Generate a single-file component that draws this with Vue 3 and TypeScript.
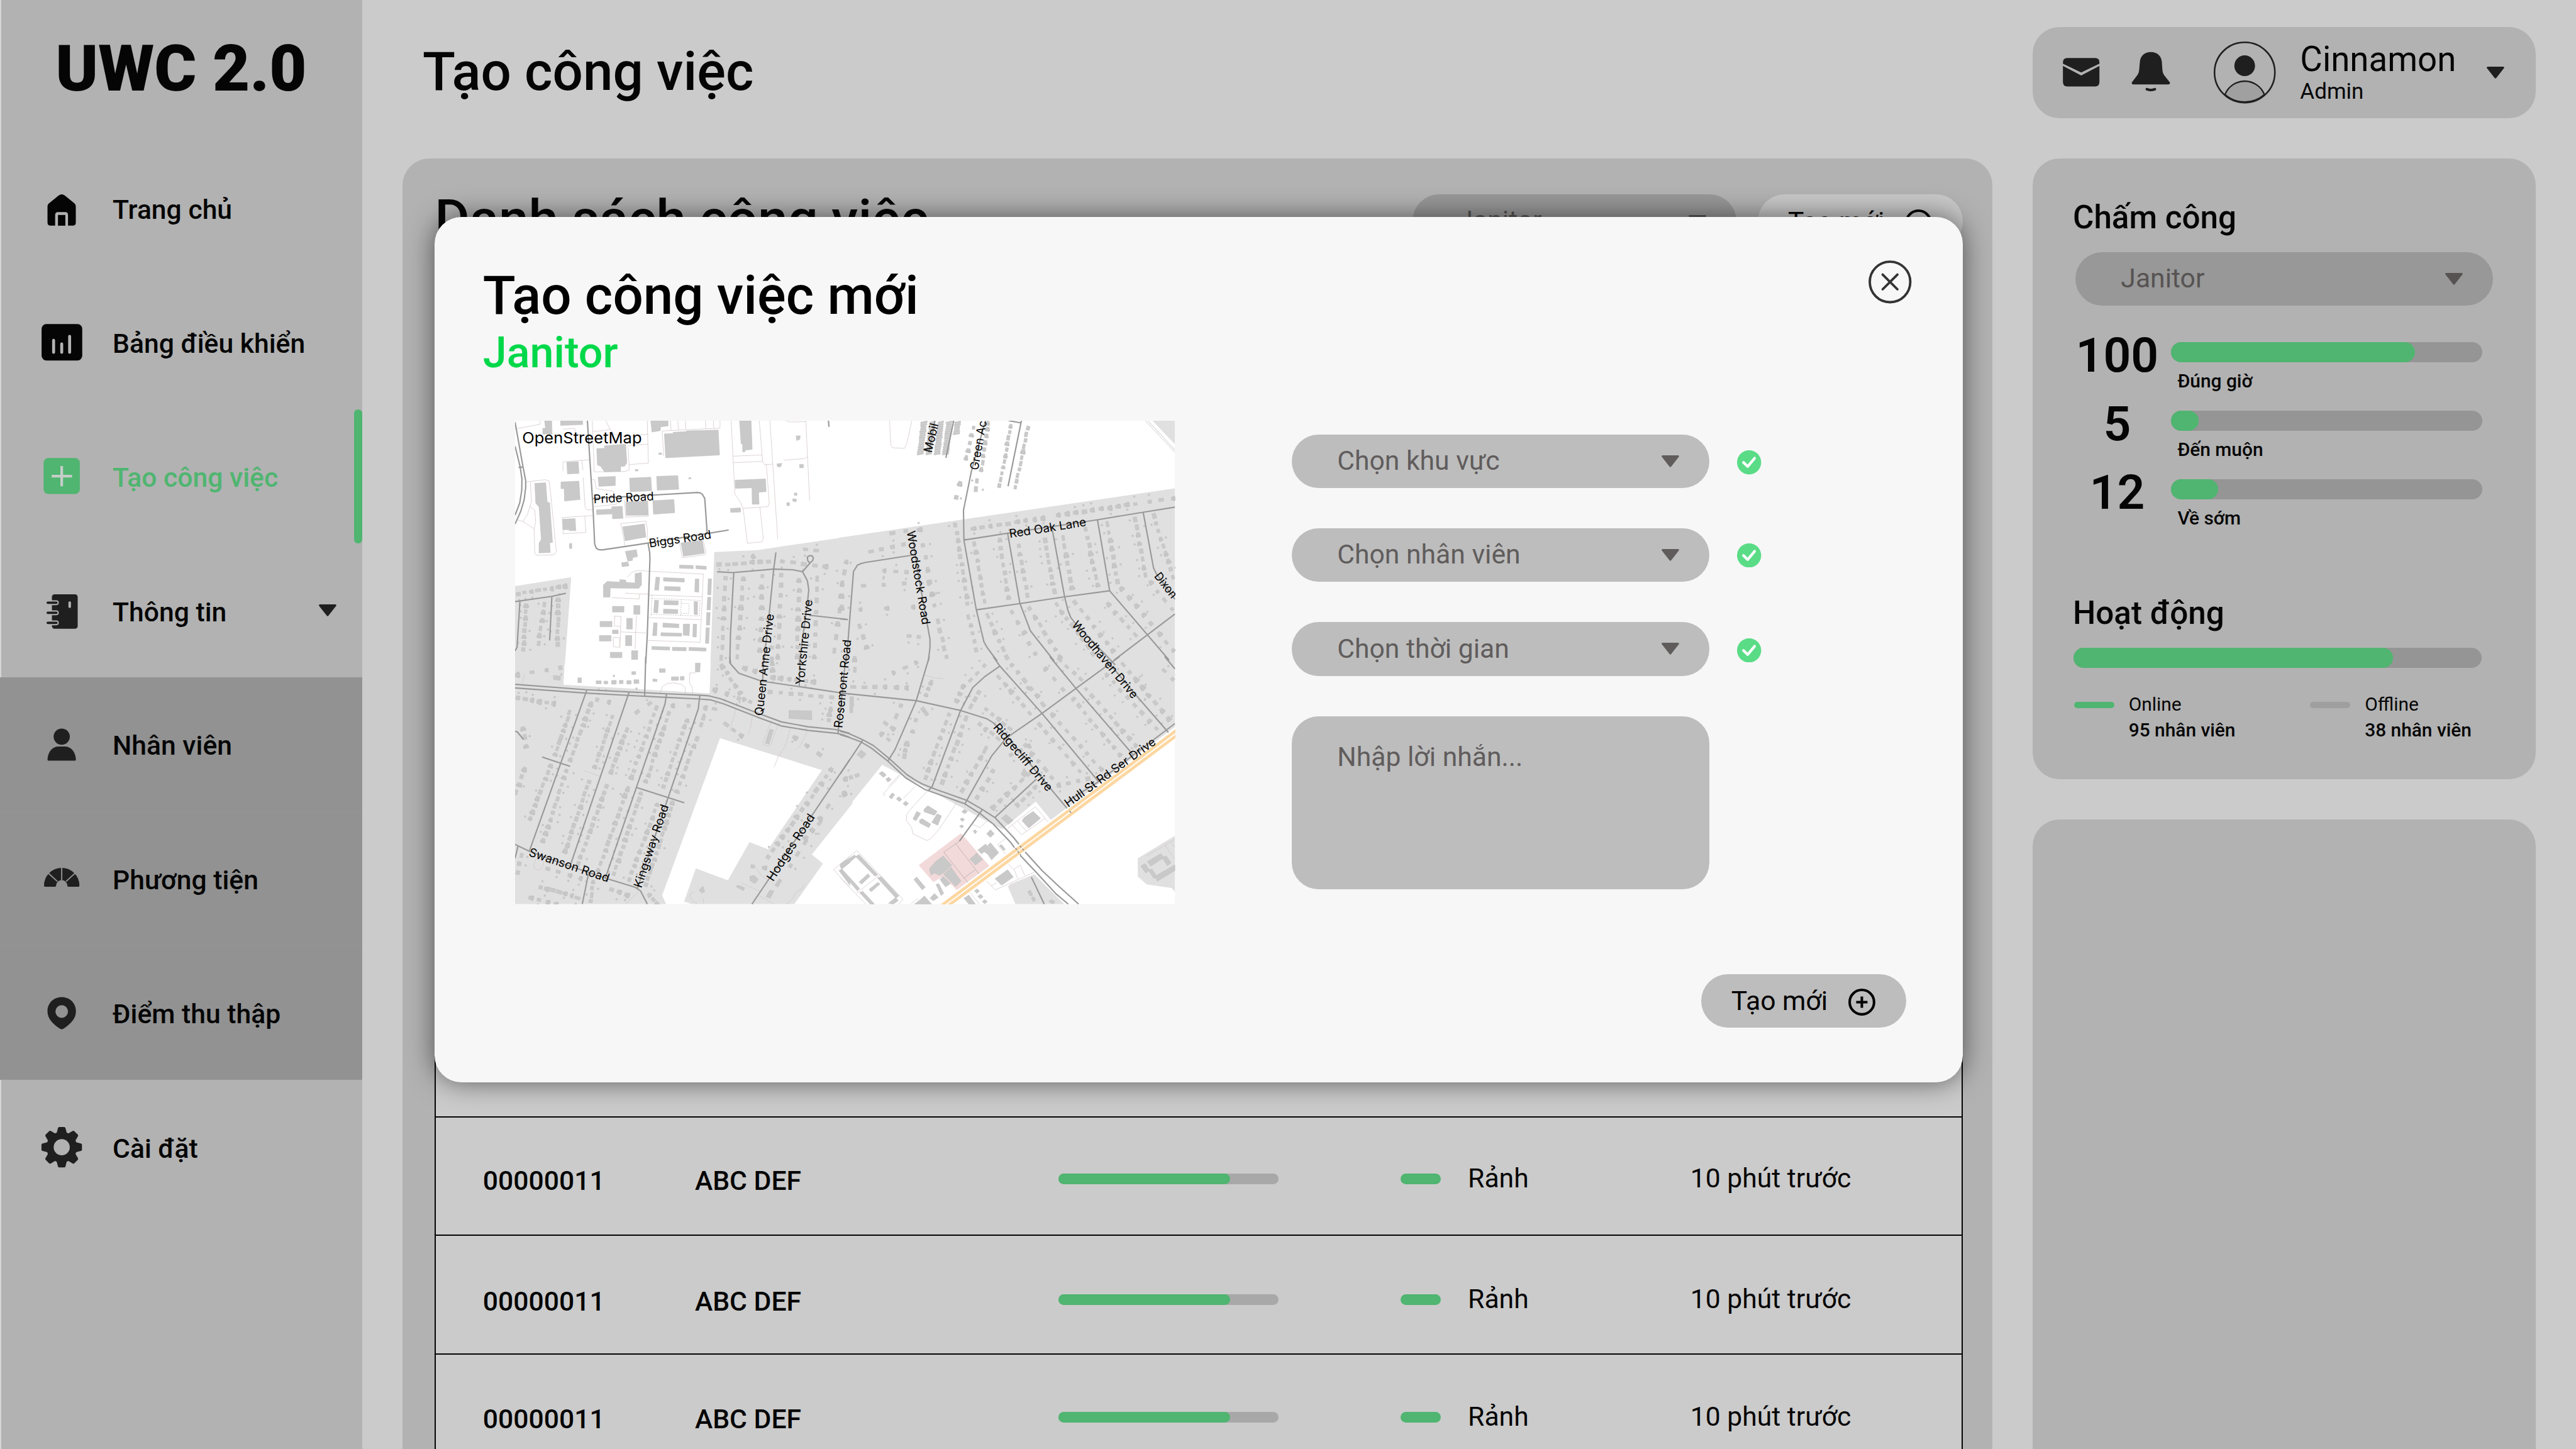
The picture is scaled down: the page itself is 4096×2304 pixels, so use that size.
<script setup lang="ts">
interface NavItem {
  label: string
  icon: string
  active?: boolean
  sub?: boolean
  caret?: boolean
}

const nav: NavItem[] = [
  { label: 'Trang chủ', icon: 'home' },
  { label: 'Bảng điều khiển', icon: 'board' },
  { label: 'Tạo công việc', icon: 'create', active: true },
  { label: 'Thông tin', icon: 'book', caret: true },
  { label: 'Nhân viên', icon: 'person', sub: true },
  { label: 'Phương tiện', icon: 'gauge', sub: true },
  { label: 'Điểm thu thập', icon: 'pin', sub: true },
  { label: 'Cài đặt', icon: 'gear' },
]

const attendance = [
  { count: 100, label: 'Đúng giờ', share: 78.4 },
  { count: 5, label: 'Đến muộn', share: 9 },
  { count: 12, label: 'Về sớm', share: 15.3 },
]

const jobs = [1, 2, 3].map((key) => ({
  key,
  id: '00000011',
  name: 'ABC DEF',
  progress: 78,
  status: 'Rảnh',
  time: '10 phút trước',
}))

const fields = ['Chọn khu vực', 'Chọn nhân viên', 'Chọn thời gian']

/* ---------- map ---------- */
// The survey is split into four sheets, each with its own grid; place() brings
// sheet coordinates into the 1366 x 1000 map.
type Sheet = { kx: number; ky: number; dx: number; dy: number }
const NW: Sheet = { kx: 0.4592, ky: 0.3316, dx: -27.1, dy: -21.9 }
const NE: Sheet = { kx: 0.4592, ky: 0.3316, dx: 673, dy: -21.9 }
const SW: Sheet = { kx: 0.4592, ky: 0.338, dx: -27.1, dy: 488 }
const SE: Sheet = { kx: 0.4592, ky: 0.338, dx: 673, dy: 488 }

const project = (s: Sheet, pts: string): number[][] =>
  pts.split(' ').map((p) => {
    const [x, y] = p.split(',').map(Number)
    return [x * s.kx + s.dx, y * s.ky + s.dy]
  })
const place = (s: Sheet, list: string[]): string[] =>
  list.map((pts) => project(s, pts).map((p) => p.map((v) => v.toFixed(1)).join(',')).join(' '))

const land = [
  ...place(NW, ['957,885 1150,873 1568,788 1568,1580 940,1580', '59,1098 312,1042 284,1580 59,1580']),
  ...place(NE, ['-5,796 1509,488 1509,1580 -5,1580', '1408,66 1509,66 1509,212']),
  ...place(SW, [
    '59,0 284,0 277,172 936,225 942,0 1580,0 1580,900 1397,1212 1447,1268 1318,1515 855,1515 821,1500 874,1297 1018,1370 1116,1136 1200,1180 1442,695 983,500 722,1462 740,1515 59,1515',
  ]),
  ...place(SE, [
    '-5,0 1509,0 1509,430 950,1000 882,888 732,1057 650,1000 440,845 340,770 262,715 190,662 -5,990',
    '1509,1097 1342,1235 1342,1347 1382,1395 1495,1417 1509,1440',
    '757,1410 765,1395 875,1333 1010,1515 790,1515',
  ]),
]
const retail = place(SE, ['545,1082 673,1282 525,1430 466,1345 420,1380 354,1277'])

const buildings = [
  ...place(NW, [
    '192,66 224,66 226,150 184,150 184,113 196,113',
    '264,66 364,66 364,90 264,96',
    '671,66 749,66 749,98 715,104 714,128 676,137',
    '732,148 772,145 772,138 832,134 832,129 975,124 981,280 738,298',
    '427,240 462,238 462,222 558,212 563,330 552,350 535,352 535,382 462,385 445,350 430,342',
    '292,325 344,321 347,395 295,398',
    '433,418 511,413 511,470 437,476',
    '575,424 671,418 675,503 578,510',
    '697,413 793,408 797,494 700,500',
    '266,448 347,443 352,558 282,567 280,490 266,490',
    '148,457 197,453 204,575 215,577 228,825 215,827 218,888 167,891 167,830 177,805 167,605 152,580',
    '273,680 330,677 333,752 303,752 303,746 275,746',
    '426,622 495,617 495,603 542,600 546,675 498,678 498,648 427,652',
    '558,573 655,567 659,655 561,657',
    '680,565 775,558 779,640 683,650',
    '544,728 642,710 649,792 555,815',
    '807,828 903,811 913,893 818,912',
    '556,881 606,871 611,914 590,920 588,938 567,942',
    '539,952 568,947 572,972 542,977',
    '1071,66 1123,66 1128,245 1097,250 1095,260 1085,260 1085,213 1078,210',
    '1051,437 1188,429 1191,508 1157,512 1159,587 1128,587 1127,485 1052,488',
    '1030,613 1075,610 1076,636 1031,638',
    '457,1090 475,1069 530,1073 532,1057 557,1060 560,1075 600,1078 600,1020 629,1013 629,1090 617,1112 488,1110 487,1167 457,1167',
    '817,1335 846,1335 844,1407 817,1404',
    '800,967 862,969 862,989 800,986', '874,970 921,975 921,994 874,989',
    '728,1045 822,1050 822,1073 728,1067', '733,1100 804,1103 804,1128 733,1124',
    '694,1042 711,1043 706,1124 688,1122', '871,1053 888,1054 887,1136 869,1133',
    '731,1188 795,1190 794,1216 730,1214', '728,1241 793,1244 792,1270 728,1268',
    '688,1186 706,1187 702,1265 684,1263', '866,1194 882,1195 881,1277 866,1274',
    '726,1328 798,1335 797,1358 725,1354', '717,1388 810,1392 810,1411 716,1408',
    '684,1327 700,1328 697,1408 679,1406', '862,1335 878,1337 876,1416 860,1414',
    '930,1052 945,1053 942,1153 927,1152', '927,1167 942,1168 939,1247 924,1246',
    '923,1262 939,1263 936,1342 921,1341', '920,1357 935,1358 932,1456 917,1454',
    '676,1474 756,1478 756,1498 676,1494', '768,1479 831,1481 830,1502 768,1500', '843,1480 920,1484 920,1504 843,1500',
    '498,1224 550,1224 550,1260 498,1260', '594,1219 622,1219 622,1274 594,1274', '442,1318 496,1318 496,1352 442,1352',
    '562,1299 588,1299 588,1366 562,1366', '439,1406 492,1406 492,1441 439,1441', '557,1406 585,1406 585,1470 557,1470',
    '488,1511 541,1511 541,1545 488,1545', '584,1501 612,1501 612,1556 584,1556', '498,1372 524,1372 524,1395 498,1395',
    '304,832 315,832 315,863 304,863', '601,370 613,370 613,380 601,380', '842,421 852,421 852,429 842,429',
    '707,267 720,267 720,277 707,277', '1342,338 1359,338 1359,360 1342,360', '1240,335 1262,332 1256,355 1241,352',
    '1318,517 1330,517 1330,532 1318,532', '1284,577 1296,577 1296,596 1284,596', '1312,552 1328,556 1326,572 1310,568',
    '1326,160 1345,160 1343,182 1328,190',
  ]),
  ...place(SW, [
    '1294,330 1396,333 1397,387 1294,378',
    '1187,530 1207,445 1224,450 1204,536',
    '1519,1310 1532,1300 1568,1370 1568,1400', '1523,1282 1568,1235 1568,1262 1532,1300',
    '872,40 894,40 892,94 872,94', '764,124 796,124 796,146 764,146', '804,122 821,122 821,144 804,144',
    '710,74 736,74 736,97 710,97', '680,137 699,139 699,153 680,152', '585,92 603,92 603,110 585,110',
    '232,115 265,120 262,146 232,140', '342,130 358,130 358,160 342,160',
    '1118,1345 1138,1340 1156,1365 1140,1390 1118,1372', '1190,1470 1208,1430 1226,1435 1210,1480',
    '1230,1400 1250,1360 1262,1370 1244,1412', '1055,1408 1065,1400 1094,1415 1088,1433', '888,1430 906,1405 914,1440 900,1448',
  ]),
  ...place(SE, [
    '402,1300 430,1255 465,1220 503,1278 470,1320 447,1340 425,1325 410,1338',
    '466,1333 500,1290 545,1375 520,1407',
    '585,1240 615,1203 642,1242 610,1277',
    '820,1005 830,985 870,948 903,990 850,1050',
    '698,1360 755,1305 781,1350 728,1400',
    '620,1185 655,1148 705,1213 683,1245 665,1210 650,1195 637,1208',
    '665,1155 678,1140 715,1200 703,1217',
    '660,1085 678,1060 695,1085 677,1107',
    '727,990 748,966 780,1003 758,1028',
    '378,935 395,912 437,948 425,972 378,950', '328,995 345,948 363,960 342,1005',
    '358,1000 370,993 408,1025 400,1047 358,1018', '413,1015 437,962 457,975 440,1033',
    '0,1270 65,1215 73,1225 8,1300', '70,1225 85,1212 170,1335 157,1345', '0,1310 8,1300 88,1420 78,1435',
    '85,1380 125,1330 135,1345 97,1393', '168,1355 185,1347 265,1465 252,1480', '87,1445 102,1437 155,1515 135,1515',
    '218,1510 250,1475 262,1495 240,1515', '130,1425 170,1382 180,1392 140,1440',
    '450,1365 465,1345 498,1390 475,1410', '332,1365 345,1350 384,1412 370,1428', '432,1395 445,1390 467,1450 455,1463',
    '360,1490 380,1465 412,1515 335,1515', '405,1480 425,1450 443,1475 420,1495', '558,1480 580,1460 610,1515 580,1515',
    '605,1435 618,1422 628,1437 616,1449', '620,1468 633,1455 645,1470 632,1483', '640,1500 652,1488 664,1500 652,1513',
    '1385,1255 1445,1207 1460,1230 1400,1283', '1452,1232 1470,1220 1492,1262 1475,1280',
    '1355,1283 1375,1267 1395,1307 1378,1325', '1390,1310 1405,1300 1428,1345 1415,1360', '1420,1345 1509,1275 1509,1310 1430,1375',
    '175,715 190,703 208,725 195,740', '205,750 220,738 230,755 215,768', '220,860 235,835 246,845 232,872',
    '253,870 265,858 278,875 266,888', '283,900 296,885 308,900 296,915', '75,600 95,572 117,597 98,625',
    '718,1158 727,1150 745,1180 737,1188', '600,1068 608,1060 617,1072 608,1085', '548,950 560,935 574,948 562,962',
    '540,995 550,988 561,998 551,1010', '538,1038 548,1030 558,1040 548,1050',
    '845,1440 858,1430 868,1460 856,1466', '862,1475 873,1470 882,1492 870,1500', '940,1500 952,1487 968,1500 960,1515',
    '815,720 828,690 845,710 832,740', '640,590 655,545 667,555 652,595',
  ]),
]

// Repeatable pseudo-random numbers, so that the blocks look alike on each load.
let seed = 20231
const rand = (): number => {
  seed = (seed * 16807) % 2147483647
  return seed / 2147483647
}
const box = (cx: number, cy: number, w: number, h: number, a: number): string => {
  const c = Math.cos(a)
  const s = Math.sin(a)
  const corner = (u: number, v: number) => `${(cx + u * c - v * s).toFixed(1)} ${(cy + u * s + v * c).toFixed(1)}`
  return `M${corner(-w, -h)}L${corner(w, -h)}L${corner(w, h)}L${corner(-w, h)}Z`
}
// A row of n houses from one point to another, with sheds behind some of them.
const row = (s: Sheet, line: string, n: number, size = 1): string => {
  const [[x1, y1], [x2, y2]] = project(s, line)
  const a = Math.atan2(y2 - y1, x2 - x1)
  let d = ''
  for (let i = 0; i < n; i++) {
    const t = n > 1 ? i / (n - 1) : 0
    const x = x1 + (x2 - x1) * t + (rand() - 0.5) * 2
    const y = y1 + (y2 - y1) * t + (rand() - 0.5) * 2
    const w = (3.4 + rand() * 2.4) * size
    const h = (2.8 + rand() * 1.3) * size
    d += box(x, y, w, h, a)
    if (rand() > 0.6) d += box(x + w * 0.4 * Math.cos(a), y + w * 0.4 * Math.sin(a), w * 0.5, h * 1.45, a)
    if (size === 1 && rand() > 0.3) {
      const off = (rand() > 0.5 ? 1 : -1) * (9 + rand() * 7)
      d += box(x - off * Math.sin(a), y + off * Math.cos(a), 1.6, 1.6, a)
    }
  }
  return d
}
const rows: [Sheet, string, number, number?][] = [
  [NW, '980,965 1200,945', 7], [NW, '72,1145 285,1100', 8], [NW, '109,1220 97,1490', 8], [NW, '191,1215 165,1455', 6],
  [NW, '255,1185 250,1460', 8], [NW, '1006,1050 990,1545', 9], [NW, '1087,1050 1060,1540', 9], [NW, '1173,1035 1165,1500', 8],
  [NW, '1258,1030 1245,1540', 9], [NW, '1340,1065 1330,1540', 9], [NW, '1420,1050 1410,1540', 8], [NW, '1265,945 1460,975', 5],
  [NW, '1370,870 1415,875', 2], [NW, '1535,1080 1500,1500', 6], [NW, '1215,1480 1215,1560', 2], [NW, '1130,915 1135,910', 1],
  [NE, '600,740 915,674', 9], [NE, '985,657 1330,585', 10], [NE, '1395,570 1500,550', 3], [NE, '605,835 650,1195', 8],
  [NE, '720,810 758,1170', 8], [NE, '805,845 845,1155', 7], [NE, '924,815 965,1130', 8], [NE, '1005,800 1045,1110', 7],
  [NE, '1108,745 1160,1090', 8], [NE, '1205,710 1250,1070', 8], [NE, '1330,680 1375,1030', 8], [NE, '1415,660 1500,1040', 9],
  [NE, '520,715 575,1210', 11], [NE, '580,1290 612,1495', 5], [NE, '665,1285 750,1540', 6], [NE, '775,1260 880,1520', 5],
  [NE, '855,1240 990,1540', 7], [NE, '975,1215 1140,1520', 8], [NE, '1060,1200 1230,1500', 7], [NE, '1210,1215 1330,1400', 5],
  [NE, '1270,1115 1400,1330', 5], [NE, '1440,1400 1500,1500', 3], [NE, '1400,1075 1495,1240', 4],
  [NE, '770,100 718,470', 11, 0.9], [NE, '845,115 790,480', 11, 0.9], [NE, '600,110 570,300', 5, 0.9], [NE, '668,80 638,370', 8, 0.9],
  [NE, '540,460 525,545', 2], [NE, '615,440 612,490', 2], [NE, '235,770 360,745', 3], [NE, '138,880 285,840', 4],
  [NE, '375,845 415,1150', 5], [NE, '30,945 20,1010', 2], [NE, '200,1000 300,1010', 3], [NE, '105,1095 290,1080', 3],
  [NE, '90,1245 330,1230', 3], [NE, '90,1350 120,1480', 3], [NE, '310,1410 355,1415', 2], [NE, '440,1320 480,1540', 5],
  [NE, '8,1085 5,1235', 3], [NE, '400,1080 425,1220', 3],
  [SW, '305,345 238,600', 8], [SW, '400,295 308,630', 9], [SW, '497,370 420,675', 9], [SW, '562,450 492,705', 8],
  [SW, '695,315 583,740', 11], [SW, '752,350 650,765', 11], [SW, '833,390 728,795', 11], [SW, '877,500 790,825', 8],
  [SW, '908,375 898,415', 2], [SW, '218,670 128,990', 9], [SW, '290,700 187,1125', 11], [SW, '393,765 285,1190', 12],
  [SW, '470,795 345,1265', 13], [SW, '565,810 435,1310', 13], [SW, '628,835 505,1330', 13], [SW, '700,905 575,1365', 12],
  [SW, '770,895 650,1395', 14], [SW, '70,255 235,288', 6], [SW, '100,690 65,830', 4], [SW, '175,1410 340,1475', 7],
  [SW, '130,1480 245,1515', 4], [SW, '410,1380 400,1500', 4], [SW, '1485,695 1200,1225', 14], [SW, '1470,915 1300,1280', 6],
  [SW, '1550,750 1545,840', 2], [SW, '435,157 605,155', 6], [SW, '70,110 265,70', 4], [SW, '995,60 1090,260', 6],
  [SW, '960,205 1120,280', 4], [SW, '1220,130 1405,155', 6], [SW, '1210,215 1485,250', 7], [SW, '1010,415 1080,485', 3],
  [SW, '1320,495 1430,600', 3], [SW, '430,262 480,280', 2], [SW, '610,342 665,287', 2], [SW, '915,312 957,323', 2],
  [SW, '1095,70 1140,90', 2], [SW, '1215,10 1220,80', 3], [SW, '1480,320 1475,390', 3], [SW, '95,440 110,550', 3],
  [SW, '1430,1020 1370,1110', 3], [SW, '90,1220 70,1320', 3], [SW, '205,1300 355,1360', 4], [SW, '495,1425 565,1460', 3],
  [SW, '770,300 840,300', 2], [SW, '665,1460 700,1510', 3], [SW, '1130,1285 1185,1295', 2],
  [SE, '345,40 240,100', 3], [SE, '65,15 65,80', 2], [SE, '60,185 300,190', 6], [SE, '650,58 555,185', 4], [SE, '625,220 590,305', 3],
  [SE, '567,380 460,770', 9], [SE, '490,355 385,740', 9], [SE, '715,125 855,345', 6], [SE, '775,50 915,290', 6],
  [SE, '990,20 1085,140', 4], [SE, '925,75 1005,200', 3], [SE, '850,190 890,240', 2], [SE, '960,360 1175,690', 8],
  [SE, '900,420 1080,700', 7], [SE, '1110,200 1330,540', 9], [SE, '1275,50 1480,380', 8], [SE, '1200,110 1425,440', 8],
  [SE, '1050,260 1260,600', 9], [SE, '635,620 550,820', 5], [SE, '690,700 620,860', 4], [SE, '770,600 850,550', 3],
  [SE, '835,545 955,740', 5], [SE, '850,720 690,920', 6], [SE, '880,800 800,910', 4], [SE, '985,790 1115,750', 4],
  [SE, '660,325 765,440', 5], [SE, '630,415 710,500', 4], [SE, '205,410 235,440', 2], [SE, '255,365 275,300', 2],
  [SE, '300,535 290,610', 3], [SE, '340,390 325,460', 2], [SE, '525,275 555,185', 3], [SE, '410,160 390,235', 3],
  [SE, '375,325 385,345', 2], [SE, '188,475 217,510', 2], [SE, '50,260 50,330', 3], [SE, '25,750 75,725', 3],
  [SE, '1460,85 1500,135', 2], [SE, '1335,140 1360,190', 2], [SE, '1390,235 1395,240', 1], [SE, '20,840 22,845', 1],
]
const houses = rows.map((r) => row(...r)).join('')

// Mobile homes stand in tight slanted files.
let homes = ''
for (let c = 0; c < 5; c++) {
  for (let r = 0; r < (c > 3 ? 6 : 15); r++) {
    const [[x, y]] = project(NE, `${378 + c * 38 - r * 1.2},${76 + r * 14}`)
    homes += box(x, y, 5.5 + rand() * 1.5, 1.7, -0.22 + rand() * 0.06)
  }
}

const roads = [
  ...place(NW, [
    '385,66 398,350 410,600 418,835 425,862 435,870 452,872 665,828 925,770 1022,748',
    '408,552 880,514 893,516 903,525 914,550 925,765',
    '658,828 666,890 667,930 655,1400 648,1580',
    '59,75 95,355 107,440 107,480 100,560 85,630 59,710',
    '59,225 82,355 90,430 89,500 80,580 59,655',
    '75,357 95,355',
    '59,1195 225,1162 288,1143', '225,1162 215,1437', '81,1190 68,1480 59,1502',
    '970,1008 1040,1014 1225,992 1312,996 1355,1008 1377,1065 1383,1120 1378,1190 1340,1580',
    '1235,888 1225,992 1205,1270 1180,1580', '1045,1014 1030,1400 1027,1580',
    '1355,1008 1388,955 1378,938 1377,918 1383,909 1396,908 1404,920 1401,938 1388,955',
    '1385,1280 1558,1306', '1472,66 1474,104',
  ]),
  ...place(NE, [
    '427,66 400,265', '512,66 477,298',
    '655,66 592,380 556,625 558,810 613,1240 648,1445 662,1480 708,1565',
    '760,66 817,80', '817,66 757,475', '560,810 755,768 1160,684 1366,637 1509,605',
    '755,768 810,1205 858,1378 965,1565', '955,735 1012,1165 1027,1250 1040,1295 1060,1330 1240,1590',
    '1160,684 1215,1127 1483,1560', '1366,637 1413,985 1425,1020 1509,1180',
    '615,1246 810,1207 1012,1165 1215,1127', '1509,1272 1235,1560',
    '325,905 115,950 95,957 78,967 60,1007 28,1570', '0,1302 35,1307', '325,770 350,1010 405,1430 405,1480 397,1570',
  ]),
  ...place(SW, [
    '59,170 380,203 742,228 892,236 930,240 985,258 1140,340 1260,400 1380,430 1500,446 1530,455 1568,470',
    '59,192 380,224 742,250 892,260 940,265 1000,290 1150,370 1260,425 1380,452 1510,470 1540,480 1568,495',
    '648,0 643,242', '383,203 123,1192', '573,218 310,1270', '742,230 735,290 465,1360', '892,236 885,320 610,1420',
    '181,615 307,672', '608,802 822,895', '59,1150 123,1192 290,1275 475,1360 600,1412 625,1435 655,1515',
    '72,1162 59,1235', '390,1330 362,1515', '59,457 70,462 97,507', '1027,0 1031,45 1068,102 1170,150 1568,230',
    '1180,0 1175,152', '1345,0 1340,180', '1550,0 1515,470', '1568,630 1127,1515',
  ]),
  ...place(SE, [
    '-5,222 343,270 543,330 660,380 690,405 760,500 925,770 1040,957',
    '402,0 343,270 247,570 215,640', '720,58 650,125 598,190 543,330 415,795 398,820',
    '690,0 720,58 910,348 1165,765', '945,0 1063,195 1320,600', '1260,0 1063,195 910,348 750,497 682,610 563,900',
    '1200,20 1330,230 1480,465', '1463,0 1509,75', '1030,880 1160,770 1509,410', '885,750 698,985',
    '642,935 538,1130', '103,510 0,720',
    '0,457 40,472 100,508 150,545 222,625 300,722 340,757 370,780 430,812 570,880 640,935 697,985 780,1105 830,1190 910,1310 985,1405 1075,1515',
    '0,478 40,495 95,523 140,560 215,640 295,742 380,812 560,900 630,960 690,1025 770,1140 810,1215 880,1315 975,1455 1028,1515',
    '862,1350 920,1515',
  ]),
]
const highways = place(SE, ['455,1526 1520,448', '486,1526 1520,480'])
const crossings = place(SE, ['810,1158 828,1188', '790,1172 815,1218', '1034,945 1042,957'])
const paths = [
  ...place(NW, [
    '59,117 172,88 172,66', '275,118 327,115 333,140 352,155 392,150', '407,66 416,385 550,383 573,375 573,340 568,220 660,212',
    '655,66 660,330 573,340', '410,133 460,128 487,118 468,66', '487,118 505,150 555,165 660,150', '729,288 722,130 983,112 983,66',
    '760,66 762,126', '793,66 795,122', '827,66 829,120', '917,66 919,116', '953,66 955,114',
    '275,380 275,322 395,310', '360,314 365,375', '405,433 418,435 425,490 500,505 518,560 515,588 415,602',
    '366,420 375,610 385,622 408,622', '272,670 408,658', '272,670 276,772 378,763 374,662',
    '108,448 195,434 212,442 218,500 245,880 235,903 155,906 148,895 145,740 95,695 65,683', '128,448 133,570 115,650 95,695',
    '125,600 148,625 152,700 145,740', '552,560 558,668 660,662 657,560', '555,845 536,708 648,692 656,745 655,810',
    '800,820 813,922 915,902 920,890 908,815', '1033,66 1050,525 1073,570 1087,613 1200,602 1205,580 1192,340 1183,340 1175,320 1160,66',
    '1042,287 1172,280', '1043,328 1173,319', '1087,613 1107,830 1172,822 1178,800 1163,607', '1208,66 1243,803', '1190,340 1220,337',
    '1370,66 1387,566', '1270,312 1365,302 1378,290', '1280,66 1300,74 1370,72',
    '565,1043 585,1012 610,1001 665,1005 908,1023 893,1449 652,1436', '660,1153 902,1165', '657,1294 897,1307',
    '495,1170 619,1178 620,1147 660,1147', '555,1142 620,1147', '505,1285 537,1288 535,1350 506,1346 509,1285', '535,1384 650,1390',
    '606,1280 600,1490', '502,1417 532,1420 530,1480 502,1477 502,1417', '535,1350 532,1480',
  ]),
  ...place(NE, ['223,66 228,215 237,235 290,238 300,210 323,66']),
  ...place(SW, [
    '714,222 722,185 745,165 775,161 810,170 826,190 826,228', '872,100 847,100 845,160 858,190 860,228', '101,105 91,168',
    '367,697 442,733', '1055,320 1027,452', '1128,365 1122,430 1111,478', '1215,395 1177,520 1180,540 1198,548 1212,540 1232,460 1250,405',
    '1300,440 1277,550 1245,615 1227,676', '1373,432 1370,480 1345,545 1328,567', '155,1230 143,1280 148,1300 165,1307 180,1297 190,1250',
    '1145,1293 1172,1345 1200,1370', '1080,1385 1163,1438', '1160,1465 1225,1513', '1362,1397 1350,1425 1330,1437 1300,1500 1283,1515',
    '868,1440 852,1447 848,1470 858,1495 880,1513', '907,1482 910,1515', '618,1440 575,1490 560,1515', '1568,1222 1495,1304 1568,1412',
  ]),
  ...place(SE, [
    '380,113 430,132 465,135', '273,725 195,840 202,855', '268,722 217,795', '338,795 285,868', '395,820 330,915 300,965 298,1000 323,1050 327,1085 393,1127 412,1110 450,1050 537,870',
    '0,1275 75,1187 283,1485 265,1515', '0,1353 115,1515', '73,1450 180,1335', '597,1027 630,1047 665,1005', '755,1052 880,920 940,1015',
    '775,1030 818,1090 840,1070 922,992', '800,1008 840,1070', '747,1112 710,1153 747,1212', '657,1370 700,1428 875,1320', '757,1270 785,1305 800,1360',
    '785,1300 812,1277 832,1340', '680,1405 705,1385', '583,1440 627,1515', '320,1515 345,1483 370,1515', '1380,1222 1509,1118', '1465,1155 1509,1240', '1490,1135 1509,1165',
  ]),
]
const lots = place(SE, ['538,1130 467,1198 592,1412', '522,1148 627,1332', '608,1306 558,1357'])
const rails = place(NE, ['1376,66 1509,262', '1388,66 1509,248'])
const dashed = place(NW, ['676,1155 672,1285', '675,1175 893,1187 890,1285 672,1273', '808,1180 806,1280', '808,1205 843,1207 842,1270 808,1268'])

const labels = [
  { t: 'OpenStreetMap', x: 14.5, y: 47, a: 0, w: 248, big: true },
  { t: 'Pride Road', x: 162.6, y: 170.8, a: -2.9, w: 125 },
  { t: 'Biggs Road', x: 278.5, y: 262.3, a: -8.4, w: 130 },
  { t: 'Mobil', x: 862.7, y: 67, a: -77, w: 61 },
  { t: 'Green Ac', x: 958.6, y: 103, a: -80, w: 103 },
  { t: 'Red Oak Lane', x: 1024.3, y: 242.4, a: -8.9, w: 161 },
  { t: 'Woodstock Road', x: 810.8, y: 229.5, a: 80.6, w: 196 },
  { t: 'Dixon', x: 1322.3, y: 322, a: 52, w: 60 },
  { t: 'Woodhaven Drive', x: 1151.5, y: 423, a: 50.4, w: 199 },
  { t: 'Ridgecliff Drive', x: 988.9, y: 635, a: 49.8, w: 175 },
  { t: 'Hull St Rd Ser Drive', x: 1145, y: 800.7, a: -35.9, w: 226 },
  { t: 'Hodges Road', x: 534, y: 954.4, a: -57, w: 160 },
  { t: 'Kingsway Road', x: 261.3, y: 968, a: -71.6, w: 180 },
  { t: 'Swanson Road', x: 27, y: 900, a: 18.5, w: 174 },
  { t: 'Queen Anne Drive', x: 513, y: 611.4, a: -83.8, w: 212 },
  { t: 'Yorkshire Drive', x: 598, y: 547.2, a: -84.3, w: 177 },
  { t: 'Rosemont Road', x: 677.5, y: 636.7, a: -84.3, w: 184 },
]

const teeth = [0, 45, 90, 135, 180, 225, 270, 315]
</script>

<template>
  <div class="page">
    <aside class="sidebar">
      <div class="logo">UWC 2.0</div>
      <ul class="nav">
        <li v-for="item in nav" :key="item.label" class="nav-item" :class="{ active: item.active, sub: item.sub }">
          <svg class="nav-icon" viewBox="0 0 32 32">
            <template v-if="item.icon === 'home'">
              <g transform="translate(0 -.6)">
                <path d="M5.400 15.600c0-1.400.4-2.300 1.600-3.100l6.600-5.300c1.700-1.300 3.100-1.300 4.800 0l6.600 5.300c1.100.8 1.500 1.700 1.500 3.100v11.600q0 2.400-2.200 2.400h-3.600v-7.900q0-2.200-2-2.200h-5.600q-2 0-2 2.200v7.900H7.600q-2.200 0-2.200-2.400Z" fill="#050505" />
                <rect x="13.200" y="21.600" width="5.500" height="8" fill="#050505" />
              </g>
            </template>
            <template v-else-if="item.icon === 'board'">
              <rect x="1" y="2.500" width="30.300" height="27.100" rx="3.600" fill="#050505" />
              <path d="M9.950 14.600v8.900M16 17.300v6.200M21.900 11.600v11.900" stroke="#b2b2b2" stroke-width="2.200" stroke-linecap="round" />
            </template>
            <template v-else-if="item.icon === 'create'">
              <rect x="2.500" y="2.500" width="27" height="26.800" rx="3.600" fill="#4fb570" />
              <path d="M8.500 16h15.200M16 8.400v15.200" stroke="#c6cdc8" stroke-width="2" />
            </template>
            <template v-else-if="item.icon === 'book'">
              <rect x="8.700" y="3.700" width="19.200" height="25.700" rx="2" fill="#1f1f1f" />
              <rect x="21" y="9" width="1.900" height="4.900" rx=".9" fill="#b2b2b2" />
              <g fill="none" stroke-linecap="round">
                <path v-for="y in [10, 17.5, 25]" :key="y" :d="`M5.600 ${y}H12`" stroke="#b2b2b2" stroke-width="3.600" />
                <path v-for="y in [10, 17.5, 25]" :key="`r${y}`" :d="`M5.600 ${y}H12`" stroke="#1f1f1f" stroke-width="1.800" />
              </g>
            </template>
            <template v-else-if="item.icon === 'person'">
              <circle cx="16" cy="10" r="6.050" fill="#1f1f1f" />
              <path d="M5.400 27.100c.3-6 3.600-9.800 8.400-9.800h4.400c4.800 0 8.100 3.800 8.400 9.800q0 .8-.8.8H6.200q-.8 0-.8-.8Z" fill="#1f1f1f" />
            </template>
            <template v-else-if="item.icon === 'gauge'">
              <path d="M3.600 21.200A12.400 12.400 0 0 1 28.400 21.200L21 21.200A5 5 0 0 0 11 21.200Z" fill="#1f1f1f" stroke="#1f1f1f" stroke-width="1.600" stroke-linejoin="round" />
              <path d="M16 7v10M5.200 11.100l7.600 7M26.800 11.100l-7.600 7" stroke="#929292" stroke-width=".9" />
            </template>
            <template v-else-if="item.icon === 'pin'">
              <path fill-rule="evenodd" d="M16 4c6.100 0 10.600 4.500 10.600 10.400 0 5.600-3.600 9-8.600 12.700q-2 1.700-4 0C9 23.400 5.400 20 5.400 14.400 5.400 8.500 9.900 4 16 4Zm0 6a4.700 4.700 0 1 0 0 9.400 4.700 4.700 0 0 0 0-9.400Z" fill="#1f1f1f" />
            </template>
            <template v-else>
              <circle cx="16" cy="16" r="8.700" fill="none" stroke="#1f1f1f" stroke-width="5.400" />
              <path v-for="a in teeth" :key="a" d="M11.800 7 13.200 1.700q.2-.8 1-.8h3.600q.8 0 1 .8L20.200 7Z" fill="#1f1f1f" :transform="`rotate(${a} 16 16)`" />
            </template>
          </svg>
          <span>{{ item.label }}</span>
          <svg v-if="item.caret" class="caret" viewBox="0 0 14 9"><path d="M1.200 0h11.600q1.100.2.500 1.200L7.600 8.500q-.6.700-1.200 0L.7 1.200Q.1.200 1.200 0Z" fill="#1f1f1f" /></svg>
        </li>
      </ul>
    </aside>

    <main class="main">
      <h1 class="page-title">Tạo công việc</h1>
      <section class="board">
        <header class="board-head">
          <h2>Danh sách công việc</h2>
          <div class="select dark role">
            <span>Janitor</span>
            <svg class="caret" viewBox="0 0 14 9"><path d="M1.200 0h11.600q1.100.2.500 1.200L7.600 8.500q-.6.700-1.200 0L.7 1.200Q.1.200 1.200 0Z" fill="currentColor" /></svg>
          </div>
          <button class="create light">
            <span>Tạo mới</span>
            <svg viewBox="0 0 22 22"><circle cx="11" cy="11" r="9.100" /><path d="M11 6.800v8.400M6.800 11h8.400" /></svg>
          </button>
        </header>
        <div class="table">
          <div class="table-head"></div>
          <div v-for="job in jobs" :key="job.key" class="row">
            <b class="cell-id">{{ job.id }}</b>
            <b class="cell-id">{{ job.name }}</b>
            <div class="progress"><i :style="{ width: job.progress + '%' }"></i></div>
            <i class="dash"></i>
            <span>{{ job.status }}</span>
            <span>{{ job.time }}</span>
          </div>
        </div>
      </section>
    </main>

    <aside class="side">
      <section class="user">
        <svg class="tool" viewBox="0 0 30 30">
          <path d="M4.700 4.300h20.800q3.200 0 3.200 3.200v1L15.100 15.100 1.500 8.500v-1q0-3.200 3.200-3.200Z" fill="#1f1f1f" />
          <path d="M1.500 10.200 15.100 17.300 28.700 10.200v12.100q0 3.200-3.200 3.200H4.700q-3.200 0-3.200-3.200Z" fill="#1f1f1f" />
        </svg>
        <svg class="tool bell" viewBox="0 0 30 30">
          <path d="M15 -.1c4.900 0 7.900 3 8.200 7.500l.4 5.600c.1 1.500.5 2.700 1.200 4l4.100 5.200c.7 1 .3 1.800-.8 1.800H1.900c-1.100 0-1.500-.8-.8-1.800L5 17c.8-1.300 1.200-2.500 1.300-4l.5-5.600C7.100 2.900 10.100-.1 15-.1Z" fill="#1f1f1f" />
          <path d="M12 27.600q3 1.200 6 0" fill="none" stroke="#1f1f1f" stroke-width="1.900" stroke-linecap="round" />
        </svg>
        <svg class="avatar" viewBox="0 0 48 48">
          <path d="M9.300 40.500A15.800 15.800 0 0 1 38.700 40.500 22.300 22.300 0 0 1 9.300 40.500Z" fill="#a0a0a0" stroke="#1f1f1f" stroke-width="1.100" />
          <circle cx="24" cy="24" r="22.500" fill="none" stroke="#1f1f1f" stroke-width="1.200" />
          <circle cx="24" cy="19" r="7.700" fill="#1f1f1f" />
        </svg>
        <div class="who">
          <div class="name">Cinnamon</div>
          <div class="rank">Admin</div>
        </div>
        <svg class="caret" viewBox="0 0 14 9"><path d="M1.200 0h11.600q1.100.2.500 1.200L7.600 8.500q-.6.700-1.200 0L.7 1.200Q.1.200 1.200 0Z" fill="#1f1f1f" /></svg>
      </section>

      <section class="stats">
        <h3>Chấm công</h3>
        <div class="select dark">
          <span>Janitor</span>
          <svg class="caret" viewBox="0 0 14 9"><path d="M1.200 0h11.600q1.100.2.500 1.200L7.600 8.500q-.6.700-1.200 0L.7 1.200Q.1.200 1.200 0Z" fill="currentColor" /></svg>
        </div>
        <ul class="attendance">
          <li v-for="a in attendance" :key="a.label">
            <strong>{{ a.count }}</strong>
            <div>
              <div class="meter"><i :style="{ width: a.share + '%' }"></i></div>
              <span>{{ a.label }}</span>
            </div>
          </li>
        </ul>
        <h3 class="activity">Hoạt động</h3>
        <div class="meter wide"><i :style="{ width: '78.3%' }"></i></div>
        <div class="legend">
          <div class="entry"><i class="on"></i><p>Online<br /><b>95 nhân viên</b></p></div>
          <div class="entry"><i></i><p>Offline<br /><b>38 nhân viên</b></p></div>
        </div>
      </section>

      <section class="blank"></section>
    </aside>

    <div class="modal">
      <button class="close">
        <svg viewBox="0 0 34 34"><circle cx="17" cy="17" r="15.100" /><path d="M11.500 11.500l11 11M22.500 11.500l-11 11" /></svg>
      </button>
      <h2>Tạo công việc mới</h2>
      <p class="modal-role">Janitor</p>
      <div class="modal-body">
        <svg class="map" viewBox="0 0 1366 1000" preserveAspectRatio="none">
          <rect width="1366" height="1000" fill="#fff" />
          <polygon v-for="(p, i) in land" :key="`l${i}`" :points="p" fill="#e0e0e0" />
          <polygon v-for="(p, i) in retail" :key="`s${i}`" :points="p" fill="#f2d9da" />
          <g fill="none" stroke="#d3c7c7" stroke-width="1"><polyline v-for="(p, i) in paths" :key="i" :points="p" /></g>
          <g fill="none" stroke="#b5a9a9" stroke-width="1"><polyline v-for="(p, i) in lots" :key="i" :points="p" /></g>
          <g fill="none" stroke="#b9b9c0" stroke-width="1"><polyline v-for="(p, i) in rails" :key="i" :points="p" /></g>
          <g fill="none" stroke="#bdbdbd" stroke-width="1" stroke-dasharray="3 2"><polyline v-for="(p, i) in dashed" :key="i" :points="p" /></g>
          <g fill="#c9c9c9" stroke="#bcbcbc" stroke-width=".7">
            <polygon v-for="(p, i) in buildings" :key="i" :points="p" />
            <path :d="houses" />
            <path :d="homes" />
          </g>
          <g fill="none" stroke="#999" stroke-width="2.800" stroke-linejoin="round"><polyline v-for="(p, i) in roads" :key="i" :points="p" /></g>
          <g fill="none" stroke="#fff" stroke-width="12"><polyline v-for="(p, i) in highways" :key="i" :points="p" /></g>
          <g fill="none" stroke="#fdd7a1" stroke-width="6.200"><polyline v-for="(p, i) in highways" :key="i" :points="p" /></g>
          <g fill="none" stroke="#999" stroke-width="2.400" stroke-dasharray="5 3"><polyline v-for="(p, i) in crossings" :key="i" :points="p" /></g>
          <text
            v-for="l in labels"
            :key="l.t"
            :transform="`translate(${l.x} ${l.y}) rotate(${l.a})`"
            :textLength="l.w"
            lengthAdjust="spacingAndGlyphs"
            :class="{ big: l.big }"
          >{{ l.t }}</text>
        </svg>
        <div class="form">
          <div v-for="f in fields" :key="f" class="field">
            <div class="select">
              <span>{{ f }}</span>
              <svg class="caret" viewBox="0 0 14 9"><path d="M1.200 0h11.600q1.100.2.500 1.200L7.600 8.500q-.6.700-1.200 0L.7 1.200Q.1.200 1.200 0Z" fill="currentColor" /></svg>
            </div>
            <svg class="check" viewBox="0 0 18 18"><circle cx="9" cy="9" r="9" fill="#5adc86" /><path d="M4.800 9l3.100 3.100L13.100 5.900" /></svg>
          </div>
          <div class="note">Nhập lời nhắn...</div>
        </div>
      </div>
      <button class="create">
        <span>Tạo mới</span>
        <svg viewBox="0 0 22 22"><circle cx="11" cy="11" r="9.100" /><path d="M11 6.800v8.400M6.800 11h8.400" /></svg>
      </button>
    </div>
  </div>
</template>

<style>
/* 1rem is 100 units of the 1920-unit-wide layout */
html { font-size: calc(100vw / 19.2); }
body { margin: 0; overflow: hidden; }
</style>

<style scoped>
* { box-sizing: border-box; }
h1, h2, h3, p, ul { margin: 0; padding: 0; font-weight: 540; }
ul { list-style: none; }
svg { display: block; flex: none; }
button { border: 0; padding: 0; font: inherit; color: inherit; background: none; }

.page {
  position: relative;
  display: grid;
  grid-template-columns: 2.7rem 12.45rem 4.05rem;
  width: 19.2rem;
  height: 10.8rem;
  overflow: hidden;
  background: #cbcbcb;
  color: #050505;
  font-family: Roboto, "Liberation Sans", sans-serif;
  font-size: .2rem;
}

/* sidebar */
.sidebar { background: #b2b2b2; border-left: .01rem solid #d6d6d6; }
.logo { height: 1.05rem; padding-right: .01rem; line-height: 1.03rem; font-size: .48rem; font-weight: 900; text-align: center; }
.nav-item { position: relative; display: flex; align-items: center; height: 1rem; padding-left: .29rem; font-weight: 500; }
.nav-item span { margin-left: .22rem; line-height: .24rem; padding-top: .023rem; }
.nav-item .caret { margin-left: auto; margin-right: .19rem; }
.nav-item.active { color: #4fb570; }
.nav-item.active::after { content: ""; position: absolute; right: 0; top: .003rem; bottom: 0; width: .06rem; border-radius: .03rem; background: #4fb570; }
.nav-item.sub { margin-left: -.01rem; padding-left: .3rem; background: #929292; border-bottom: 1px solid #959595; }
.nav-icon { width: .32rem; height: .32rem; }
.nav-item.sub .nav-icon { margin-top: .006rem; }
.caret { width: .14rem; height: .09rem; }

/* board */
.main { padding-left: .3rem; width: 12.15rem; height: 10.8rem; }
.page-title { height: 1.18rem; padding-left: .15rem; font-size: .4rem; line-height: 1.07rem; }
.board { width: 11.85rem; height: 9.62rem; padding: 0 .22rem 0 .24rem; border-radius: .2rem .2rem 0 0; background: #b2b2b2; }
.board-head { display: flex; height: 1.83rem; }
.board-head h2 { flex: 1; font-size: .4rem; line-height: .91rem; }
.board-head .role { width: 2.41rem; margin: .27rem .16rem 0 0; }
.board-head .create { margin-top: .27rem; }
.table { height: 7.79rem; border: solid #050505; border-width: 0 .01rem; background: #cbcbcb; }
.table-head { height: 5.31rem; }
.row { display: grid; grid-template-columns: 1.58rem 2.712rem 2.55rem .5rem 1.658rem auto; align-items: start; height: .88rem; padding: .334rem 0 0 .35rem; border-top: .01rem solid #050505; line-height: .24rem; }
.row:nth-child(3) { height: .89rem; padding-top: .354rem; }
.row:nth-child(4) { padding-top: .342rem; }
.cell-id { margin-top: .019rem; font-weight: 500; }
.progress, .dash { height: .08rem; margin-top: .084rem; border-radius: .04rem; }
.progress { width: 1.64rem; background: #a8a8a8; }
.progress i { display: block; height: 100%; border-radius: .04rem; background: #4fb570; }
.dash { width: .296rem; background: #4fb570; }

/* controls */
.select { display: flex; align-items: center; justify-content: space-between; width: 3.11rem; height: .4rem; padding: 0 .22rem 0 .338rem; border-radius: .2rem; background: #bdbdbd; color: #605c5c; }
.select span { padding-bottom: .014rem; }
.select.dark { background: #989898; color: #575353; }
.create { display: flex; align-items: center; justify-content: space-between; width: 1.53rem; height: .4rem; padding: 0 .22rem 0 .226rem; border-radius: .2rem; background: #bdbdbd; color: #000; }
.create.light { background: #c8c8c8; color: #050505; }
.create svg { width: .22rem; height: .22rem; margin-top: .02rem; fill: none; stroke: currentColor; stroke-width: 1.9; }

/* right column */
.side { display: flex; flex-direction: column; gap: .3rem; width: 4.05rem; height: 10.8rem; padding: .2rem .3rem 0 0; }
.side section { border-radius: .2rem; background: #b2b2b2; }
.user { display: flex; align-items: center; height: .68rem; padding: 0 .23rem 0 .21rem; }
.tool { width: .3rem; height: .3rem; overflow: visible; }
.bell { margin-left: .22rem; }
.avatar { width: .48rem; height: .48rem; margin-left: .31rem; }
.who { flex: 1; align-self: flex-start; margin-left: .174rem; padding-top: .104rem; }
.name { font-size: .256rem; line-height: .28rem; }
.rank { font-size: .164rem; line-height: .2rem; }
.stats { height: 4.63rem; padding: .3rem .25rem 0 .3rem; }
.stats h3 { font-size: .24rem; line-height: .28rem; font-weight: 500; }
.stats .select { margin: .12rem 0 .19rem .02rem; }
.attendance li { display: flex; height: .51rem; }
.attendance strong { width: .66rem; margin-right: .07rem; text-align: center; font-size: .36rem; font-weight: 590; line-height: .36rem; }
.attendance span { display: block; padding-left: .05rem; margin-top: .053rem; font-size: .14rem; line-height: .18rem; }
.meter { width: 2.32rem; height: .15rem; margin-top: .08rem; border-radius: .08rem; background: #959595; }
.meter i { display: block; height: 100%; border-radius: .08rem; background: #4fb570; }
.meter.wide { width: 3.04rem; margin: .12rem 0 0 .007rem; }
.stats .activity { margin-top: .43rem; }
.legend { display: flex; margin: .178rem 0 0 .009rem; font-size: .14rem; line-height: .192rem; }
.entry { display: flex; flex: none; width: 1.76rem; }
.entry i { width: .3rem; height: .05rem; margin: .072rem .107rem 0 0; border-radius: .025rem; background: #9f9f9f; }
.entry i.on { background: #4fb570; }
.entry p { font-weight: 400; white-space: nowrap; }
.entry b { font-weight: 550; }
.side .blank { flex: 1; border-radius: .2rem .2rem 0 0; }

/* dialog */
.modal { position: absolute; left: 3.239rem; top: 1.618rem; width: 11.393rem; height: 6.45rem; padding: .355rem .424rem 0 .36rem; border-radius: .2rem; background: #f7f7f7; color: #000; box-shadow: 0 0 .2rem rgba(0, 0, 0, .55); }
.modal h2 { font-size: .4rem; line-height: .46rem; }
.modal-role { margin-top: .01rem; font-size: .32rem; line-height: .38rem; color: #00d84a; }
.close { position: absolute; right: .375rem; top: .312rem; }
.close svg { width: .34rem; height: .34rem; fill: none; stroke: #333; stroke-width: 1.8; stroke-linecap: round; }
.modal-body { display: flex; margin: .315rem 0 .52rem .242rem; height: 3.602rem; }
.map { width: 4.918rem; height: 3.602rem; overflow: hidden; }
.map text { font-family: Inter, "Liberation Sans", sans-serif; font-size: 24.5px; fill: #000; }
.map text.big { font-size: 31.5px; }
.form { margin: .1rem 0 0 .87rem; }
.field { display: flex; align-items: center; height: .4rem; margin-bottom: .3rem; }
.check { width: .18rem; height: .18rem; margin: .02rem 0 0 .21rem; }
.field:nth-child(2) .check { margin-top: 0; }
.check path { fill: none; stroke: #fff; stroke-width: 2; stroke-linecap: round; stroke-linejoin: round; }
.note { width: 3.11rem; height: 1.29rem; padding: .184rem .338rem; border-radius: .2rem; background: #bdbdbd; color: #605c5c; line-height: .24rem; }
.modal > .create { margin-left: auto; }
</style>
